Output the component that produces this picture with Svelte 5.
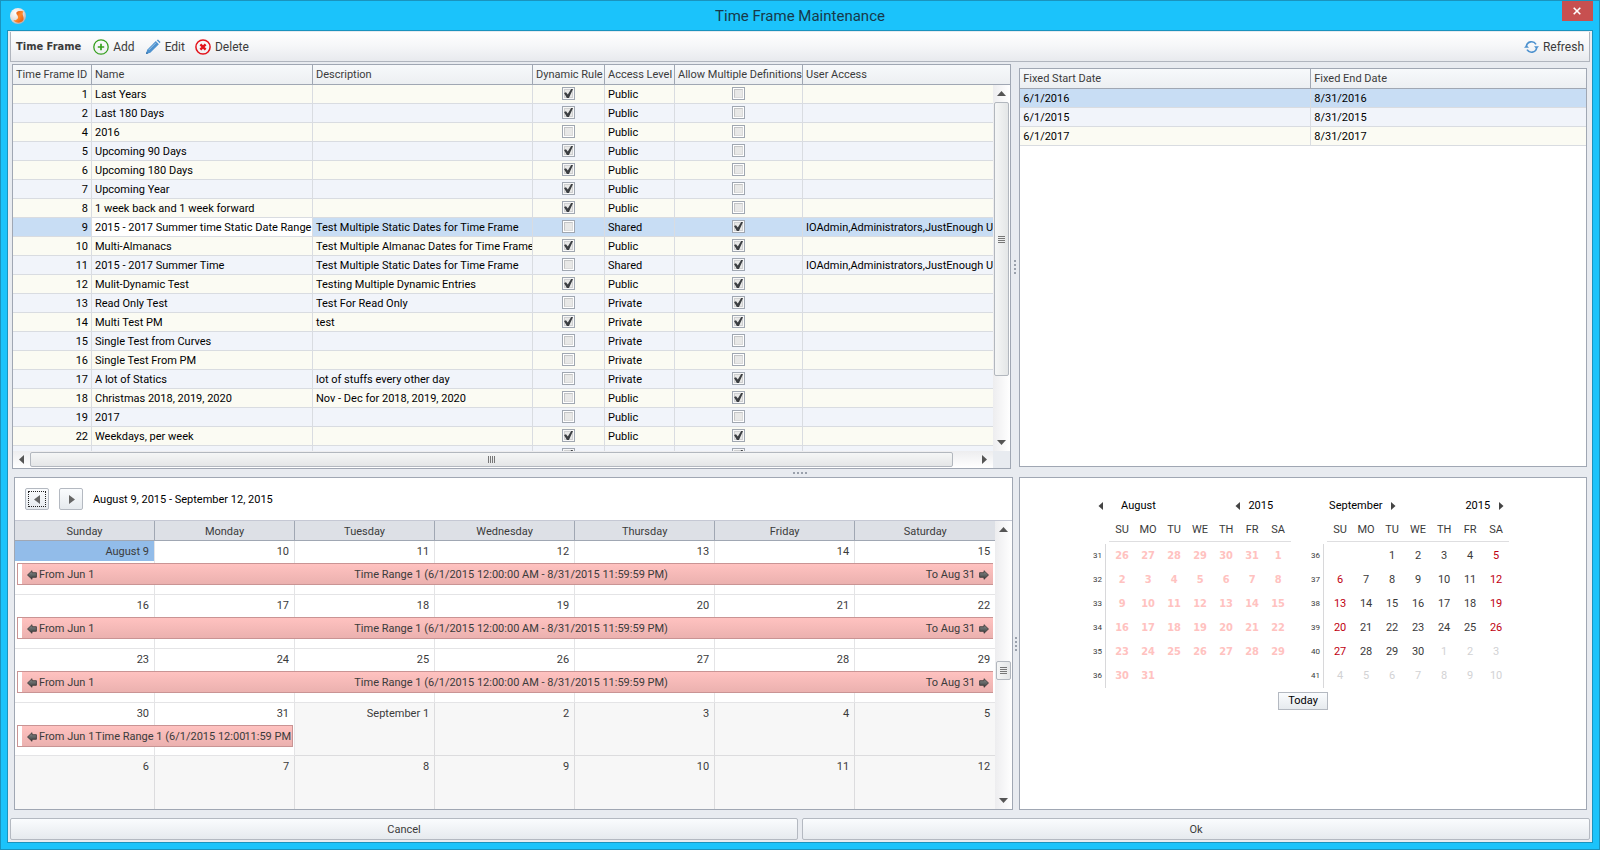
<script>
  const frames = [
    { id: 1, name: 'Last Years', desc: '', dynamic: true, level: 'Public', multi: false, users: '' },
    { id: 2, name: 'Last 180 Days', desc: '', dynamic: true, level: 'Public', multi: false, users: '' },
    { id: 4, name: '2016', desc: '', dynamic: false, level: 'Public', multi: false, users: '' },
    { id: 5, name: 'Upcoming 90 Days', desc: '', dynamic: true, level: 'Public', multi: false, users: '' },
    { id: 6, name: 'Upcoming 180 Days', desc: '', dynamic: true, level: 'Public', multi: false, users: '' },
    { id: 7, name: 'Upcoming Year', desc: '', dynamic: true, level: 'Public', multi: false, users: '' },
    { id: 8, name: '1 week back and 1 week forward', desc: '', dynamic: true, level: 'Public', multi: false, users: '' },
    { id: 9, name: '2015 - 2017 Summer time Static Date Range', desc: 'Test Multiple Static Dates for Time Frame', dynamic: false, level: 'Shared', multi: true, users: 'IOAdmin,Administrators,JustEnough Users' },
    { id: 10, name: 'Multi-Almanacs', desc: 'Test Multiple Almanac Dates for Time Frame', dynamic: true, level: 'Public', multi: true, users: '' },
    { id: 11, name: '2015 - 2017 Summer Time', desc: 'Test Multiple Static Dates for Time Frame', dynamic: false, level: 'Shared', multi: true, users: 'IOAdmin,Administrators,JustEnough Users' },
    { id: 12, name: 'Mulit-Dynamic Test', desc: 'Testing Multiple Dynamic Entries', dynamic: true, level: 'Public', multi: true, users: '' },
    { id: 13, name: 'Read Only Test', desc: 'Test For Read Only', dynamic: false, level: 'Private', multi: true, users: '' },
    { id: 14, name: 'Multi Test PM', desc: 'test', dynamic: true, level: 'Private', multi: true, users: '' },
    { id: 15, name: 'Single Test from Curves', desc: '', dynamic: false, level: 'Private', multi: false, users: '' },
    { id: 16, name: 'Single Test From PM', desc: '', dynamic: false, level: 'Private', multi: false, users: '' },
    { id: 17, name: 'A lot of Statics', desc: 'lot of stuffs every other day', dynamic: false, level: 'Private', multi: true, users: '' },
    { id: 18, name: 'Christmas 2018, 2019, 2020', desc: 'Nov - Dec for 2018, 2019, 2020', dynamic: false, level: 'Public', multi: true, users: '' },
    { id: 19, name: '2017', desc: '', dynamic: false, level: 'Public', multi: false, users: '' },
    { id: 22, name: 'Weekdays, per week', desc: '', dynamic: true, level: 'Public', multi: true, users: '' },
    { id: '', name: '', desc: '', dynamic: true, level: '', multi: true, users: '' }
  ]

  const ranges = [
    ['6/1/2016', '8/31/2016'],
    ['6/1/2015', '8/31/2015'],
    ['6/1/2017', '8/31/2017']
  ]

  let selectedFrame = $state(9)
  let selectedRange = $state(0)

  const weekdays = ['Sunday', 'Monday', 'Tuesday', 'Wednesday', 'Thursday', 'Friday', 'Saturday']
  const full = 'Time Range 1 (6/1/2015 12:00:00 AM - 8/31/2015 11:59:59 PM)'

  const weeks = [
    { days: ['August 9', 10, 11, 12, 13, 14, 15], title: full, to: 'To Aug 31', span: 7 },
    { days: [16, 17, 18, 19, 20, 21, 22], title: full, to: 'To Aug 31', span: 7 },
    { days: [23, 24, 25, 26, 27, 28, 29], title: full, to: 'To Aug 31', span: 7 },
    { days: [30, 31, 'September 1', 2, 3, 4, 5], title: 'Time Range 1 (6/1/2015 12:00', to: '11:59 PM', span: 2, grayFrom: 2 },
    { days: [6, 7, 8, 9, 10, 11, 12], grayFrom: 0 }
  ]

  const august = {
    numbers: [31, 32, 33, 34, 35, 36],
    rows: [
      [26, 27, 28, 29, 30, 31, 1],
      [2, 3, 4, 5, 6, 7, 8],
      [9, 10, 11, 12, 13, 14, 15],
      [16, 17, 18, 19, 20, 21, 22],
      [23, 24, 25, 26, 27, 28, 29],
      [30, 31, '', '', '', '', '']
    ]
  }

  const september = {
    numbers: [36, 37, 38, 39, 40, 41],
    rows: [
      ['', '', 1, 2, 3, 4, 5],
      [6, 7, 8, 9, 10, 11, 12],
      [13, 14, 15, 16, 17, 18, 19],
      [20, 21, 22, 23, 24, 25, 26],
      [27, 28, 29, 30, 1, 2, 3],
      [4, 5, 6, 7, 8, 9, 10]
    ]
  }

  const dayClass = (busy, row, col) => {
    if (busy) return 'busy'
    if (row * 7 + col > 31) return 'other'
    return col === 0 || col === 6 ? 'weekend' : ''
  }
</script>

{#snippet scrollbar(dir, before, size, after)}
  <div class="scroll {dir}">
    <button class="arrow" aria-label={dir === 'v' ? 'Scroll up' : 'Scroll left'}>
      <svg width="9" height="9" viewBox="0 0 9 9">
        <path d={dir === 'v' ? 'M0 7h9L4.5 2z' : 'M7 0v9L2 4.5z'} />
      </svg>
    </button>
    <div style="flex: {before} 0 0"></div>
    <div class="thumb" style="flex: {size} 0 0">
      <i></i><i></i><i></i><i></i>
    </div>
    <div style="flex: {after} 0 0"></div>
    <button class="arrow" aria-label={dir === 'v' ? 'Scroll down' : 'Scroll right'}>
      <svg width="9" height="9" viewBox="0 0 9 9">
        <path d={dir === 'v' ? 'M0 2h9L4.5 7z' : 'M2 0v9l5-4.5z'} />
      </svg>
    </button>
  </div>
{/snippet}

{#snippet splitter(dir)}
  <div class="splitter {dir}"><i></i><i></i><i></i><i></i></div>
{/snippet}

{#snippet step(dir)}
  <button class="step" aria-label={dir === 'prev' ? 'Previous' : 'Next'}>
    <svg width="8" height="8" viewBox="0 0 8 8">
      <path d={dir === 'prev' ? 'M6 0v8L1.500 4z' : 'M2 0v8l4.500-4z'} />
    </svg>
  </button>
{/snippet}

{#snippet bigArrow()}
  <svg width="10" height="10" viewBox="0 0 10 10">
    <path d="M.5 5 5 .7v2h4.400v4.600H5v2z" fill="url(#steel)" stroke="#333" stroke-width=".8" />
  </svg>
{/snippet}

{#snippet monthDays(month, busy)}
  <table class="month">
    <thead>
      <tr>
        <td></td>
        {#each ['SU', 'MO', 'TU', 'WE', 'TH', 'FR', 'SA'] as d}
          <th>{d}</th>
        {/each}
      </tr>
    </thead>
    <tbody>
      {#each month.rows as row, r}
        <tr>
          <td class="week-no"><span>{month.numbers[r]}</span></td>
          {#each row as day, c}
            <td class={dayClass(busy, r, c)}>{day}</td>
          {/each}
        </tr>
      {/each}
    </tbody>
  </table>
{/snippet}

<div class="window">
  <header class="titlebar">
    <svg class="logo" width="16" height="16" viewBox="0 0 16 16">
      <defs>
        <radialGradient id="ball" cx=".35" cy=".3" r=".8">
          <stop offset="0" stop-color="#fff" />
          <stop offset=".6" stop-color="#e2dcd8" />
          <stop offset="1" stop-color="#a9a4a8" />
        </radialGradient>
        <linearGradient id="ribbon" x1="0" y1="0" x2="1" y2="1">
          <stop offset="0" stop-color="#d9480f" />
          <stop offset=".5" stop-color="#ff8a2a" />
          <stop offset="1" stop-color="#e0530f" />
        </linearGradient>
        <linearGradient id="steel" x1="0" y1="0" x2="0" y2="1">
          <stop offset="0" stop-color="#8a8e8e" />
          <stop offset="1" stop-color="#3a3c3c" />
        </linearGradient>
      </defs>
      <circle cx="8" cy="8" r="8" fill="url(#ball)" />
      <path d="M13.400 3.400C10.500 2.700 6.600 2.900 6.300 5c-.2 1.700 1.900 2.300 1.700 4.400-.2 2-2 2.900-4.600 2.800 1.900 3 7.300 3.500 9.600.4 1.300-1.900.3-3.900-.2-5.600-.4-1.500.1-2.600.6-3.600z" fill="url(#ribbon)" />
    </svg>
    <h1>Time Frame Maintenance</h1>
    <button class="close" aria-label="Close">
      <svg width="8" height="8" viewBox="0 0 8 8"><path d="M.7.7l6.600 6.600M7.300.7L.7 7.300" stroke="#fff" stroke-width="1.600" /></svg>
    </button>
  </header>

  <main class="client">
    <div class="toolbar">
      <strong>Time Frame</strong>
      <button>
        <svg width="16" height="16" viewBox="0 0 16 16" fill="none" stroke="#37a01f">
          <circle cx="8" cy="8" r="7.200" stroke-width="1.300" />
          <path d="M8 4.800v6.400M4.800 8h6.400" stroke-width="1.700" />
        </svg>
        Add
      </button>
      <button>
        <svg width="16" height="16" viewBox="0 0 16 16">
          <path d="M1 15l1.200-4.300L10.800 2.100l3.100 3.100-8.600 8.600z" fill="#4e92cf" />
          <path d="M11.700 1.300L13 .5l2.500 2.500-.8 1.300z" fill="#4e92cf" />
          <path d="M3.700 11L11 3.700" stroke="#9cc6ea" />
          <path d="M1 15l.6-2.200 1.600 1.600z" fill="#2f6ea8" />
        </svg>
        Edit
      </button>
      <button>
        <svg width="16" height="16" viewBox="0 0 16 16" fill="none" stroke="#e3131b">
          <circle cx="8" cy="8" r="7.100" stroke-width="1.500" />
          <path d="M5.400 5.400l5.200 5.200M10.600 5.400l-5.200 5.200" stroke-width="2.400" />
        </svg>
        Delete
      </button>
      <button class="refresh">
        <svg width="15" height="16" viewBox="0 0 15 16">
          <path d="M2.400 7.200A5.200 5.200 0 0 1 12 5.300M12.600 8.800A5.200 5.200 0 0 1 3 10.700" fill="none" stroke="#4e92cf" stroke-width="1.600" />
          <path d="M10 7.200h5L12.500 10zM5 8.800H0L2.500 6z" fill="#4e92cf" />
        </svg>
        Refresh
      </button>
    </div>

    <section class="row upper">
      <div class="panel frames">
        <div class="frames-main">
          <div class="viewport">
            <table class="grid">
              <colgroup>
                <col class="w-id" /><col class="w-name" /><col class="w-desc" /><col class="w-rule" />
                <col class="w-level" /><col class="w-multi" /><col />
              </colgroup>
              <thead>
                <tr>
                  <th>Time Frame ID</th>
                  <th>Name</th>
                  <th>Description</th>
                  <th>Dynamic Rule</th>
                  <th>Access Level</th>
                  <th>Allow Multiple Definitions</th>
                  <th>User Access</th>
                </tr>
              </thead>
              <tbody>
                {#each frames as f}
                  <tr class:selected={f.id === selectedFrame} onclick={() => (selectedFrame = f.id)}>
                    <td class="num">{f.id}</td>
                    <td class="name">{f.name}</td>
                    <td>{f.desc}</td>
                    <td class="check"><input type="checkbox" checked={f.dynamic} disabled aria-label="Dynamic Rule" /></td>
                    <td>{f.level}</td>
                    <td class="check"><input type="checkbox" checked={f.multi} disabled aria-label="Allow Multiple Definitions" /></td>
                    <td>{f.users}</td>
                  </tr>
                {/each}
              </tbody>
            </table>
          </div>
          <div class="side">
            <div class="head-cap"></div>
            {@render scrollbar('v', 0, 274, 58)}
          </div>
        </div>
        <div class="frames-foot">
          {@render scrollbar('h', 0, 923, 23)}
          <div class="corner"></div>
        </div>
      </div>
      {@render splitter('v')}
      <div class="panel dates">
        <table class="grid">
          <colgroup><col class="w-start" /><col /></colgroup>
          <thead>
            <tr><th>Fixed Start Date</th><th>Fixed End Date</th></tr>
          </thead>
          <tbody>
            {#each ranges as [start, end], i}
              <tr class:selected={i === selectedRange} onclick={() => (selectedRange = i)}>
                <td>{start}</td>
                <td>{end}</td>
              </tr>
            {/each}
          </tbody>
        </table>
      </div>
    </section>

    {@render splitter('h')}

    <section class="row lower">
      <div class="panel calendar">
        <div class="cal-nav">
          <button class="focused" aria-label="Previous weeks">
            <svg width="9" height="9" viewBox="0 0 9 9"><path d="M7 0v9L1 4.500z" fill="#666" /></svg>
          </button>
          <button aria-label="Next weeks">
            <svg width="9" height="9" viewBox="0 0 9 9"><path d="M2 0v9l6-4.500z" fill="#666" /></svg>
          </button>
          <span>August 9, 2015 - September 12, 2015</span>
        </div>
        <div class="cal-body">
          <div class="cal-main">
            <div class="day-heads">
              {#each weekdays as d}
                <div>{d}</div>
              {/each}
            </div>
            <div class="weeks">
              {#each weeks as week, w}
                <div class="week">
                  {#each week.days as day, d}
                    <div class="day" class:gray={d >= week.grayFrom} style="grid-column: {d + 1}">
                      <div class="date" class:today={w === 0 && d === 0}>{day}</div>
                    </div>
                  {/each}
                  {#if week.title}
                    <div class="event" class:ends={week.span < 7} style="grid-column: 1 / span {week.span}">
                      <span class="from">{@render bigArrow()} From Jun 1</span>
                      <span class="title">{week.title}</span>
                      <span class="to">
                        {week.to}
                        {#if week.span === 7}
                          <span class="flip">{@render bigArrow()}</span>
                        {/if}
                      </span>
                    </div>
                  {/if}
                </div>
              {/each}
            </div>
          </div>
          {@render scrollbar('v', 124, 17, 113)}
        </div>
      </div>
      {@render splitter('v')}
      <div class="panel picker">
        <div class="months">
          <div>
            <div class="month-head aug">
              {@render step('prev')}
              <span class="month-name">August</span>
              {@render step('prev')}
              <span>2015</span>
            </div>
            {@render monthDays(august, true)}
          </div>
          <div>
            <div class="month-head sep">
              <span>September</span>
              {@render step('next')}
              <span class="year">2015</span>
              {@render step('next')}
            </div>
            {@render monthDays(september, false)}
          </div>
        </div>
        <button class="today-btn">Today</button>
      </div>
    </section>

    <footer>
      <button>Cancel</button>
      <button>Ok</button>
    </footer>
  </main>
</div>

<style>
  :global(body) {
    background: #1bc3fb;
  }
  .window,
  .window * {
    box-sizing: border-box;
  }
  .window {
    display: flex;
    flex-direction: column;
    height: 100vh;
    min-height: 640px;
    padding: 0 6px 6px;
    border: 1px solid #1a93be;
    background: #1bc3fb;
    color: #3b3b3b;
    font: 11px/14px Roboto, 'DejaVu Sans Condensed', sans-serif;
  }
  button {
    padding: 0;
    border: 0;
    background: none;
    color: inherit;
    font: inherit;
  }
  svg {
    display: block;
    flex: none;
  }

  .titlebar {
    display: flex;
    align-items: center;
    justify-content: space-between;
    flex: none;
    height: 29px;
  }
  .logo {
    margin: 0 12px 0 3px;
  }
  h1 {
    margin: 0;
    color: #17394a;
    font-size: 15px;
    font-weight: normal;
    line-height: 20px;
  }
  .close {
    display: flex;
    align-items: center;
    justify-content: center;
    align-self: flex-start;
    width: 31px;
    height: 20px;
    background: #c75050;
  }

  .client {
    display: flex;
    flex-direction: column;
    flex: 1;
    min-height: 0;
    padding: 1px 2px 2px;
    border: 1px solid #1a93be;
    background: #e8ebf0;
  }
  .toolbar {
    display: flex;
    align-items: center;
    gap: 10px;
    flex: none;
    height: 30px;
    margin-bottom: 2px;
    padding: 0 5px;
    border: 1px solid #b0b5be;
    border-top: 0;
    background: linear-gradient(#fff, #f5f6f8 50%, #e8eaee);
    font-size: 12px;
  }
  .toolbar strong {
    margin-right: 2px;
    font: bold 11px 'DejaVu Sans Condensed', 'DejaVu Sans', sans-serif;
  }
  .toolbar button {
    display: flex;
    align-items: center;
    gap: 4px;
  }
  .toolbar .refresh {
    margin-left: auto;
  }

  .row {
    display: grid;
    margin-right: 3px;
  }
  .upper {
    flex: 1;
    grid-template-columns: minmax(0, 44fr) 8px minmax(0, 25fr);
    grid-template-rows: minmax(0, 1fr);
    min-height: 0;
    margin-left: 2px;
  }
  .lower {
    flex: none;
    grid-template-columns: minmax(0, 44fr) 6px minmax(0, 25fr);
    margin-left: 4px;
  }
  .panel {
    border: 1px solid #a0a7b3;
    background: #fff;
    overflow: hidden;
  }
  .splitter {
    display: flex;
    align-items: center;
    justify-content: center;
    gap: 2px;
    flex: none;
  }
  .splitter.v {
    flex-direction: column;
  }
  .splitter.h {
    height: 8px;
  }
  .splitter i {
    width: 2px;
    height: 2px;
    background: #9aa1ac;
  }

  .frames {
    display: flex;
    flex-direction: column;
  }
  .frames-main {
    display: flex;
    flex: 1;
    min-height: 0;
  }
  .viewport {
    flex: 1;
    min-width: 0;
    overflow: hidden;
  }
  .side {
    display: flex;
    flex-direction: column;
    width: 17px;
  }
  .head-cap {
    height: 20px;
    border-bottom: 1px solid #a0a7b3;
    background: linear-gradient(#f7f9fb, #eceff2);
  }
  .side .scroll {
    flex: 1;
  }
  .frames-foot {
    display: flex;
    flex: none;
    height: 17px;
  }
  .frames-foot .scroll {
    flex: 1;
  }
  .corner {
    width: 17px;
    background: #e8ebf0;
  }
  .dates {
    margin: 4px 0 2px;
  }

  .grid {
    width: 100%;
    table-layout: fixed;
    border-spacing: 0;
    color: #000;
  }
  .w-id {
    width: 79px;
  }
  .w-name {
    width: 221px;
  }
  .w-desc {
    width: 220px;
  }
  .w-rule {
    width: 72px;
  }
  .w-level {
    width: 70px;
  }
  .w-multi {
    width: 128px;
  }
  .w-start {
    width: 291px;
  }
  .grid th,
  .grid td {
    padding: 0 0 0 3px;
    overflow: hidden;
    text-align: left;
    white-space: nowrap;
  }
  .grid th {
    height: 20px;
    border-right: 1px solid #a0a7b3;
    border-bottom: 1px solid #a0a7b3;
    background: linear-gradient(#f7f9fb, #eceff2);
    color: #3b3b3b;
    font-weight: normal;
  }
  .grid td {
    height: 19px;
    padding-top: 2px;
    border-right: 1px solid #d9dce1;
    border-bottom: 1px solid #d9dce1;
    background: #fbfbf3;
  }
  .grid th:last-child,
  .grid td:last-child {
    border-right: 0;
  }
  .grid tr:nth-child(even) td {
    background: #f1f4fa;
  }
  .grid tr.selected td {
    background: #c8ddf4;
  }
  .grid tr.selected td.name {
    background: #fff;
  }
  .grid td.num {
    padding-right: 3px;
    text-align: right;
  }
  .grid td.check {
    padding: 2px 0 0;
    vertical-align: top;
  }
  .check input {
    appearance: none;
    display: block;
    width: 13px;
    height: 13px;
    margin: 0 auto;
    padding: 1px;
    border: 1px solid #a0a7b1;
    background: #fff;
  }
  .check input::before {
    content: '';
    display: block;
    box-sizing: border-box;
    width: 9px;
    height: 9px;
    border: 1px solid #c4c5c6;
    border-right-color: #dadada;
    border-bottom-color: #dadada;
    background: #e8e8e7;
  }
  .check input:checked::before {
    border: 0;
    background: #3c3f42;
    clip-path: polygon(0 45%, 22% 36%, 42% 62%, 80% 0, 100% 0, 55% 100%, 32% 100%);
  }
  .check input:checked {
    background: #e8e8e7;
    box-shadow: inset 0 0 0 1px #f8f8f8, inset 0 0 0 2px #cfd0d1;
  }

  .scroll {
    display: flex;
    flex: none;
  }
  .scroll.v {
    flex-direction: column;
    width: 17px;
    background: linear-gradient(90deg, #ededef, #fff);
  }
  .scroll.h {
    height: 17px;
    background: linear-gradient(#ededef, #fff);
  }
  .arrow {
    display: flex;
    align-items: center;
    justify-content: center;
    width: 17px;
    height: 17px;
    fill: #555;
  }
  .thumb {
    display: flex;
    align-items: center;
    justify-content: center;
    gap: 1px;
    border: 1px solid #b2b7be;
    border-radius: 2px;
  }
  .v .thumb {
    flex-direction: column;
    margin: 0 1px;
    background: linear-gradient(90deg, #f5f6f6, #e4e6e7);
  }
  .h .thumb {
    margin: 1px 0;
    background: linear-gradient(#f5f6f6, #e4e6e7);
  }
  .thumb i {
    background: #777;
  }
  .v .thumb i {
    width: 7px;
    height: 1px;
  }
  .h .thumb i {
    width: 1px;
    height: 7px;
  }

  .cal-nav {
    display: flex;
    align-items: center;
    gap: 10px;
    height: 42px;
    padding-left: 10px;
    color: #000;
  }
  .cal-nav button {
    display: flex;
    align-items: center;
    justify-content: center;
    width: 24px;
    height: 22px;
    border: 1px solid #b4b9c1;
    border-radius: 2px;
    background: linear-gradient(#fafcfe, #e6eaee);
  }
  .cal-nav .focused {
    outline: 1px dotted #222;
    outline-offset: -4px;
  }
  .cal-nav span {
    padding-top: 2px;
  }
  .cal-body {
    display: flex;
    border-top: 1px solid #c5c8d4;
  }
  .cal-main {
    flex: 1;
    min-width: 0;
  }
  .day-heads {
    display: grid;
    grid-template-columns: repeat(7, minmax(0, 1fr));
    height: 20px;
    border-bottom: 1px solid #a0a7b3;
    background: #dde0e6;
    line-height: 21px;
    text-align: center;
  }
  .day-heads div {
    border-right: 1px solid #a0a7b3;
  }
  .day-heads div:last-child,
  .day:nth-child(7) {
    border-right: 0;
  }
  .weeks {
    display: grid;
    grid-template-rows: repeat(3, 54px) repeat(2, 53px);
  }
  .week {
    display: grid;
    grid-template-columns: repeat(7, minmax(0, 1fr));
    grid-template-rows: 22px 22px 1fr;
  }
  .day {
    grid-row: 1 / -1;
    border-right: 1px solid #e4e4e6;
    border-bottom: 1px solid #e4e4e6;
  }
  .gray {
    border-color: #dcdcde;
    background: #f7f7f7;
  }
  .week:last-child .day {
    border-bottom: 0;
  }
  .date {
    height: 20px;
    padding-right: 5px;
    line-height: 22px;
    text-align: right;
  }
  .today {
    background: #92bce9;
  }
  .event {
    display: grid;
    grid-row: 2;
    grid-template-columns: 1fr auto 1fr;
    align-items: center;
    z-index: 1;
    margin: 0 2px;
    padding: 1px 4px 0 5px;
    border: 1px solid #c99494;
    border-right: 0;
    background: linear-gradient(90deg, #fff 4px, transparent 4px), linear-gradient(#ffc2c0, #ebb1af);
    line-height: 20px;
    white-space: nowrap;
    overflow: hidden;
  }
  .event.ends {
    grid-template-columns: auto minmax(0, 1fr) auto;
    padding-right: 1px;
    border-right: 1px solid #c99494;
  }
  .from,
  .to {
    display: flex;
    align-items: center;
    gap: 2px;
    padding-left: 4px;
  }
  .to {
    justify-content: flex-end;
    gap: 4px;
    padding-left: 0;
  }
  .title {
    padding-left: 10px;
  }
  .ends .title {
    padding-left: 1px;
  }
  .flip {
    transform: scaleX(-1);
  }

  .picker {
    display: flex;
    flex-direction: column;
    align-items: center;
    padding-top: 20px;
  }
  .months {
    display: flex;
    gap: 16px;
    padding-right: 8px;
  }
  .month-head {
    display: flex;
    align-items: center;
    height: 16px;
    color: #000;
  }
  .aug {
    gap: 6px;
    padding: 0 18px 0 8px;
  }
  .month-name {
    flex: 1;
    padding-left: 10px;
  }
  .sep {
    gap: 7px;
    padding: 0 4px 0 22px;
  }
  .year {
    margin-left: auto;
  }
  .step {
    fill: #444;
  }
  .month {
    border-spacing: 0;
    margin-top: 4px;
    text-align: center;
  }
  .month th,
  .month td {
    width: 26px;
    height: 24px;
    padding: 0;
  }
  .month th {
    height: 22px;
    border-bottom: 1px solid #dedee0;
    font-weight: normal;
  }
  .month tbody::before {
    content: '';
    display: block;
    height: 2px;
  }
  .month td:first-child {
    width: 20px;
    padding-right: 3px;
  }
  .month .week-no span {
    display: block;
    height: 24px;
    padding-right: 3px;
    border-right: 1px solid #d8d8da;
    font-size: 8px;
    line-height: 24px;
    text-align: right;
  }
  .month .busy {
    color: #ffc2c0;
    font-family: 'DejaVu Sans Condensed', 'DejaVu Sans', sans-serif;
    font-weight: bold;
  }
  .month .weekend {
    color: #c00010;
  }
  .month .other {
    color: #d2d2d4;
  }
  .today-btn {
    width: 50px;
    height: 18px;
    margin-top: 4px;
    border: 1px solid #b4b9c1;
    background: linear-gradient(#fafcfe, #e6eaee);
    color: #000;
  }

  footer {
    display: grid;
    grid-template-columns: 1fr 1fr;
    gap: 4px;
    flex: none;
    margin-top: 8px;
  }
  footer button {
    height: 22px;
    padding-top: 1px;
    border: 1px solid #b4b9c1;
    border-radius: 2px;
    background: linear-gradient(#fafcfe, #e6eaee);
  }
</style>
